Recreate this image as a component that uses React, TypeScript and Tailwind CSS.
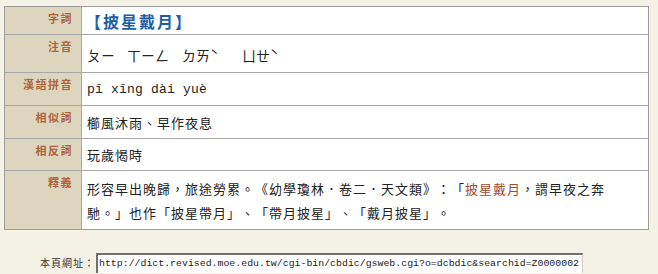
import React from "react";

const cjk = { fontFamily: '"Noto Sans CJK TC", "Noto Sans CJK SC", sans-serif' };
const mono = { fontFamily: '"Liberation Mono", "Noto Sans CJK TC", monospace' };

type RowProps = { label: string; h: string; children: React.ReactNode; last?: boolean };

function Row({ label, h, children, last }: RowProps) {
    return (
        <div className={`flex ${h} ${last ? "" : "border-b border-[#a7a7a7]"}`}>
            <div
                className="w-[77px] shrink-0 bg-[#ddd5be] border-r border-[#a7a7a7] text-right pr-[8px] pt-[3px] text-[11px] font-bold tracking-[1.5px] text-[#b0633b]"
                style={cjk}
            >
                {label}
            </div>
            <div
                className="flex-1 bg-white flex items-center pl-[5px] text-[13px] text-[#222] tracking-[1px] [text-spacing-trim:space-all]"
                style={cjk}
            >
                {children}
            </div>
        </div>
    );
}

export default function App() {
    return (
        <div className="w-[658px] h-[274px] bg-[#f4f1e5] overflow-hidden pt-[6px]">
            <div className="ml-[4px] w-[645px] border border-[#9c9c9c] flex flex-col">
                <Row label="字詞" h="h-[28px]">
                    <span className="text-[16px] font-bold text-[#1f5ea6] tracking-[2px] -ml-[2px]">【披星戴月】</span>
                </Row>
                <Row label="注音" h="h-[38px]">
                    <div className="flex pt-[4px] text-[14px] tracking-[0px]">
                        <span className="w-[40px]">ㄆㄧ</span>
                        <span className="w-[55px]">ㄒㄧㄥ</span>
                        <span className="w-[60px]">ㄉㄞˋ</span>
                        <span>ㄩㄝˋ</span>
                    </div>
                </Row>
                <Row label="漢語拼音" h="h-[33px]">
                    <span className="text-[13px] tracking-[0.2px] pt-[2px]" style={mono}>pī xīng dài yuè</span>
                </Row>
                <Row label="相似詞" h="h-[33px]">
                    <span className="pt-[2px]">櫛風沐雨、早作夜息</span>
                </Row>
                <Row label="相反詞" h="h-[32px]">
                    <span>玩歲愒時</span>
                </Row>
                <Row label="釋義" h="h-[58px]" last>
                    <p className="leading-[24px] pt-[2px]">
                        形容早出晚歸，旅途勞累。《幼學瓊林．卷二．天文類》：「
                        <span className="text-[#a4492a]">披星戴月</span>
                        ，謂早夜之奔
                        <br />
                        馳。」也作「披星帶月」、「帶月披星」、「戴月披星」。
                    </p>
                </Row>
            </div>
            <div className="flex items-center mt-[23px]">
                <span className="w-[96px] text-right text-[10px] tracking-[1px] text-[#333] pr-[1px] -mt-[2px]" style={cjk}>
                    本頁網址：
                </span>
                <div
                    className="w-[487px] h-[20px] shrink-0 border-t-2 border-l-2 border-t-[#6f6f6f] border-l-[#6f6f6f] border-r border-r-[#d4d0c8] bg-white flex items-center pl-[1px] text-[9.9px] text-[#222] whitespace-nowrap"
                    style={mono}
                >
                    http://dict.revised.moe.edu.tw/cgi-bin/cbdic/gsweb.cgi?o=dcbdic&amp;searchid=Z0000002
                </div>
            </div>
        </div>
    );
}
